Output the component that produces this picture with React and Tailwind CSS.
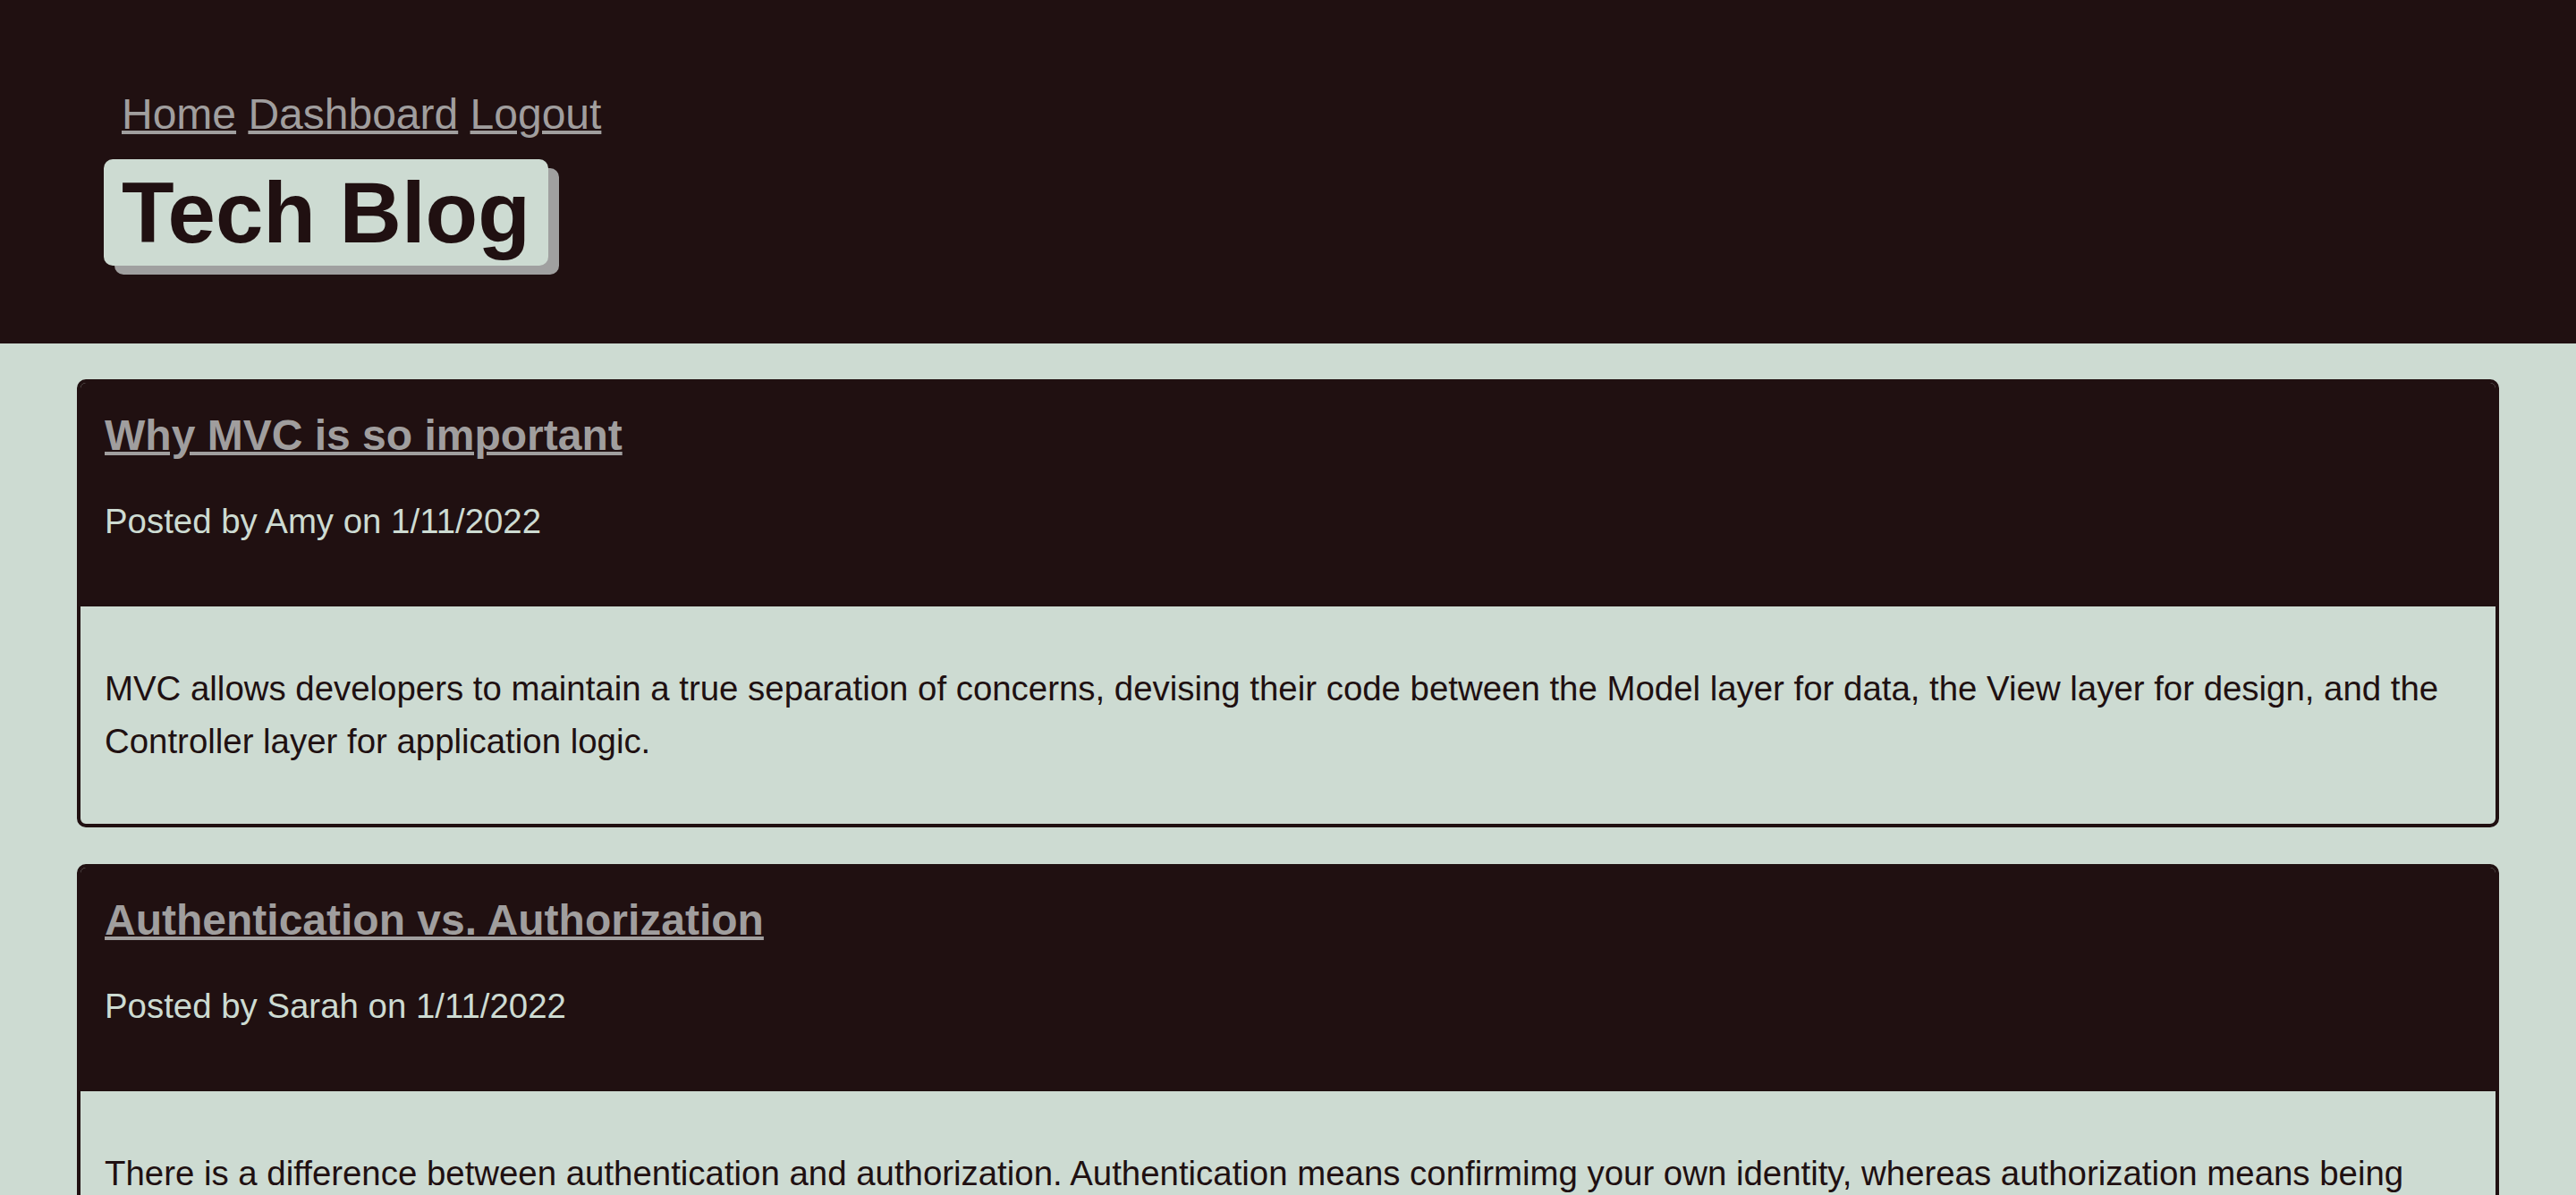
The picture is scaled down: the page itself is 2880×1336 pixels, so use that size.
import React from 'react';

const posts = [
  {
    id: 1,
    title: 'Why MVC is so important',
    author: 'Amy',
    date: '1/11/2022',
    body: 'MVC allows developers to maintain a true separation of concerns, devising their code between the Model layer for data, the View layer for design, and the Controller layer for application logic.',
  },
  {
    id: 2,
    title: 'Authentication vs. Authorization',
    author: 'Sarah',
    date: '1/11/2022',
    body: 'There is a difference between authentication and authorization. Authentication means confirmimg your own identity, whereas authorization means being allowed access to the system.',
  },
];

// Single post card
const PostCard = ({ post }) => (
  <article className="border-4 border-[#201011] rounded-[10px] overflow-hidden">
    <div className="bg-[#201011] px-[27px] pt-[31px] pb-[73px]">
      <h2 className="text-[48px] leading-[56px] font-bold">
        <a href="#" className="text-[#a09e9e] underline decoration-[4px]">
          {post.title}
        </a>
      </h2>
      <p className="mt-[46px] text-[38.4px] leading-[44px] text-[#cddbd2]">
        Posted by {post.author} on {post.date}
      </p>
    </div>
    <div className="px-[27px] pt-[62px] pb-[63px]">
      <p className="text-[38.4px] leading-[59px] text-[#201011]">{post.body}</p>
    </div>
  </article>
);

export default function App() {
  return (
    <div className="min-h-screen bg-[#cddbd2] font-['Liberation_Sans',Arial,sans-serif]">
      <header className="bg-[#201011] px-[116px] pt-[100px] pb-[87px]">
        <nav className="pl-[20px] text-[48px] leading-[56px]">
          <a href="#" className="text-[#a09e9e] underline decoration-[4px]">Home</a>{' '}
          <a href="#" className="text-[#a09e9e] underline decoration-[4px]">Dashboard</a>{' '}
          <a href="#" className="text-[#a09e9e] underline decoration-[4px]">Logout</a>
        </nav>
        <div className="mt-[22px] flex">
          <h1 className="bg-[#cddbd2] text-[#201011] text-[96px] leading-[119px] font-bold pl-[20px] pr-[20px] rounded-[10px] shadow-[12px_10px_0_#a0a0a0]">
            Tech Blog
          </h1>
        </div>
      </header>

      <main className="mx-[86px] pt-[40px] pb-[40px] flex flex-col gap-[41px]">
        {posts.map((post) => (
          <PostCard key={post.id} post={post} />
        ))}
      </main>
    </div>
  );
}
